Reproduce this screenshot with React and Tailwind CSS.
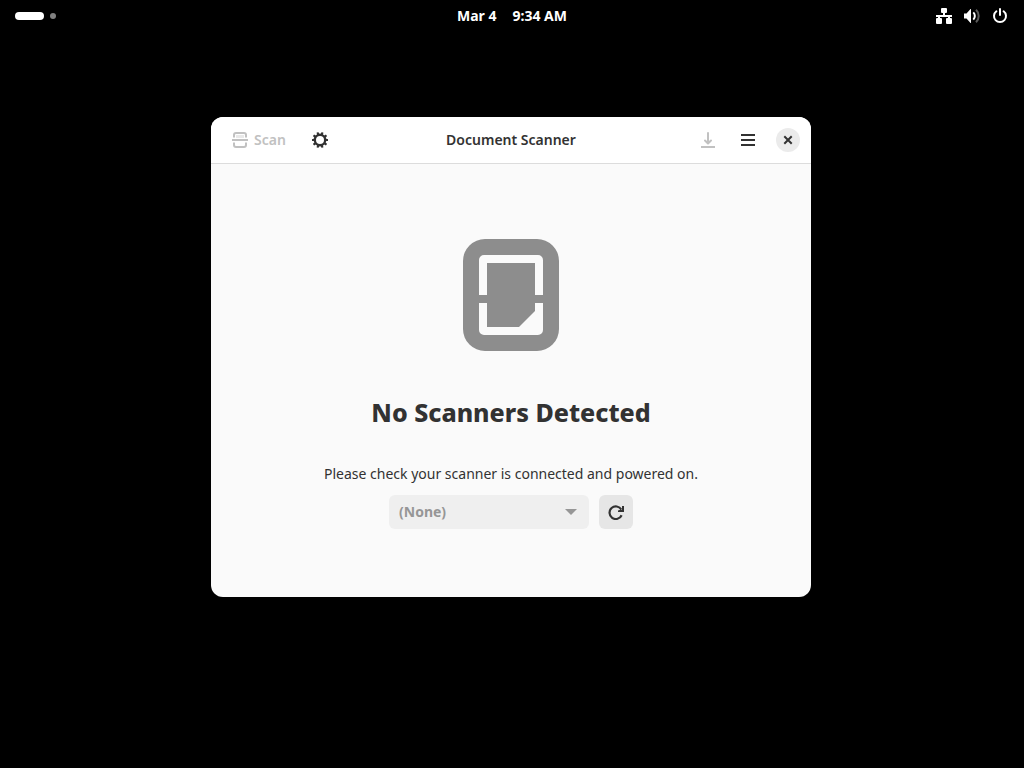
const teeth = [18, 54, 90, 126, 162, 198, 234, 270, 306, 342];

function Icon({ children, size = "size-4" }) {
  return (
    <svg viewBox="0 0 16 16" className={`${size} shrink-0`} fill="currentColor" aria-hidden="true">
      {children}
    </svg>
  );
}

function NetworkIcon() {
  return (
    <Icon>
      <rect x="5" y="0" width="6" height="5" rx="1" />
      <path d="M7 4h2v3h7v2h-2v2h-2V9H4v2H2V9H0V7h7z" />
      <rect x="0" y="10" width="6" height="6" rx="1" />
      <rect x="10" y="10" width="6" height="6" rx="1" />
    </Icon>
  );
}

function VolumeIcon() {
  return (
    <Icon>
      <path d="M0 5.500h2.500L6.500 1H7v14h-.5l-4-4.500H0z" />
      <path d="M9.300 4.400a5 5 0 0 1 0 7.200" fill="none" stroke="currentColor" strokeWidth="2" />
      <path d="M12 1.800a8.500 8.500 0 0 1 0 12.400" fill="none" stroke="currentColor" strokeWidth="2" opacity="0.35" />
    </Icon>
  );
}

function PowerIcon() {
  return (
    <Icon>
      <path d="M4.400 3.300a6 6 0 1 0 7.200 0M8 1v6" fill="none" stroke="currentColor" strokeWidth="2" strokeLinecap="round" />
    </Icon>
  );
}

function ScanIcon() {
  return (
    <Icon>
      <path d="M2 5.500V3a2 2 0 0 1 2-2h8a2 2 0 0 1 2 2v2.500M2 10.500V13a2 2 0 0 0 2 2h8a2 2 0 0 0 2-2v-2.500" fill="none" stroke="currentColor" strokeWidth="2" />
      <rect x="0" y="7" width="16" height="2" />
      <rect x="4" y="3" width="8" height="3" opacity="0.35" />
    </Icon>
  );
}

function GearIcon() {
  return (
    <Icon>
      <circle cx="8" cy="8" r="5.200" fill="none" stroke="currentColor" strokeWidth="2.400" />
      {teeth.map((a) => (
        <rect key={a} x="6.900" y="0" width="2.200" height="3" rx="0.400" transform={`rotate(${a} 8 8)`} />
      ))}
    </Icon>
  );
}

function SaveIcon() {
  return (
    <Icon>
      <path d="M8 1v10M5 8.500l3 3 3-3" fill="none" stroke="currentColor" strokeWidth="2" strokeLinecap="round" strokeLinejoin="round" />
      <rect x="1" y="14" width="14" height="2" />
    </Icon>
  );
}

function ScannerIcon() {
  return (
    <svg viewBox="0 0 96 112" className="h-28 w-24 text-[#8d8d8d]" fill="currentColor" aria-hidden="true">
      <path
        fillRule="evenodd"
        d="M22 0h52a22 22 0 0 1 22 22v68a22 22 0 0 1-22 22H22A22 22 0 0 1 0 90V22A22 22 0 0 1 22 0zM21 16a5 5 0 0 0-5 5v35h8V24h48v32h8V21a5 5 0 0 0-5-5zM16 64v27a5 5 0 0 0 5 5h54a5 5 0 0 0 5-5V64h-8v8L56 88H24V64z"
      />
    </svg>
  );
}

export default function App() {
  return (
    <div className="flex min-h-screen flex-col bg-black font-['Noto_Sans',sans-serif] text-sm text-[#323232]">
      <header className="grid h-8 grid-cols-3 items-center px-4 font-bold text-white">
        <button type="button" aria-label="Activities" className="-ml-px flex items-center gap-1.5 justify-self-start">
          <span className="h-2 w-[29px] rounded-full bg-white" />
          <span className="size-1.5 rounded-full bg-[#808080]" />
        </button>
        <button type="button" className="flex gap-4 justify-self-center whitespace-nowrap">
          <span>Mar 4</span>
          <span>9:34 AM</span>
        </button>
        <button type="button" aria-label="System menu" className="flex gap-3 justify-self-end">
          <NetworkIcon />
          <VolumeIcon />
          <PowerIcon />
        </button>
      </header>

      <main className="flex justify-center pt-[85px] pr-0.5">
        <section className="w-full max-w-[600px] overflow-hidden rounded-xl bg-[#fafafa]">
          <div className="grid h-[47px] grid-cols-[1fr_auto_1fr] items-center border-b border-[#dcdcdc] bg-white font-semibold">
            <div className="flex items-center gap-[26px] pl-[21px]">
              <button type="button" disabled className="flex items-center gap-1.5 text-[#c1c1c1]">
                <ScanIcon />
                Scan
              </button>
              <button type="button" aria-label="Scan options">
                <GearIcon />
              </button>
            </div>
            <h1>Document Scanner</h1>
            <div className="flex items-center justify-end gap-6 pr-[11px]">
              <button type="button" disabled aria-label="Save" className="text-[#c1c1c1]">
                <SaveIcon />
              </button>
              <button type="button" aria-label="Main menu">
                <Icon>
                  <path d="M1 2h14v2H1zM1 7h14v2H1zM1 12h14v2H1z" />
                </Icon>
              </button>
              <button type="button" aria-label="Close" className="-ml-1 flex size-6 items-center justify-center rounded-full bg-[#ebebeb]">
                <Icon>
                  <path d="M5 5l6 6M11 5l-6 6" stroke="currentColor" strokeWidth="2" strokeLinecap="square" />
                </Icon>
              </button>
            </div>
          </div>

          <div className="flex flex-col items-center px-6 pt-[75px] pb-[68px] text-center">
            <ScannerIcon />
            <h2 className="mt-[43px] text-[25px] leading-9 font-extrabold">No Scanners Detected</h2>
            <p className="mt-[34px] leading-5">Please check your scanner is connected and powered on.</p>
            <div className="mt-[11px] flex gap-2.5">
              <div className="relative">
                <select disabled aria-label="Scanner" className="h-[34px] w-[200px] appearance-none rounded-md bg-[#efefef] px-2.5 font-bold text-[#969696] opacity-100">
                  <option>(None)</option>
                </select>
                <svg viewBox="0 0 12 6" className="pointer-events-none absolute top-3.5 right-3 h-1.5 w-3 text-[#969696]" fill="currentColor" aria-hidden="true">
                  <path d="M0 0h12L6 6z" />
                </svg>
              </div>
              <button type="button" aria-label="Refresh" className="flex size-[34px] items-center justify-center rounded-md bg-[#e6e6e6]">
                <Icon>
                  <path d="M13.300 5.600A6.300 6.300 0 1 0 13.600 11.200" fill="none" stroke="currentColor" strokeWidth="2.200" />
                  <path d="M16 2v6h-6V6.500l1.500-.5h2.500V2z" />
                </Icon>
              </button>
            </div>
          </div>
        </section>
      </main>
    </div>
  );
}
